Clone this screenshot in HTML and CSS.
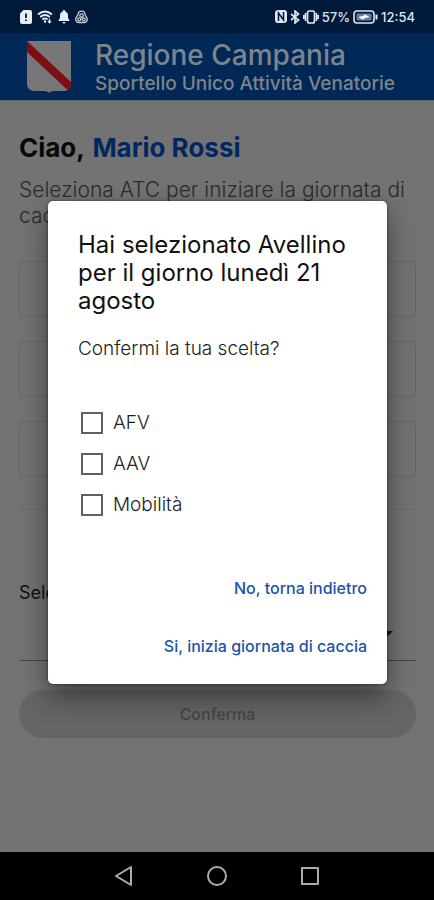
FILE: index.html
```html
<!DOCTYPE html>
<html lang="it">
<head>
<meta charset="utf-8">
<meta name="viewport" content="width=device-width, initial-scale=1">
<title>Sportello Unico Attività Venatorie</title>
<link rel="stylesheet" href="styles.css">
</head>
<body>
<div class="screen">
  <div class="status">
    <div class="status-group">
      <svg width="12" height="14" viewBox="0 0 12 14"><path d="M3.500 0H10a2 2 0 0 1 2 2v10a2 2 0 0 1-2 2H2a2 2 0 0 1-2-2V3.500z" fill="#e8edf5"/><path d="M6 3.500v4.500M6 9.500v1.500" stroke="#001a3b" stroke-width="1.800"/></svg>
      <svg width="16" height="14" viewBox="0 0 16 14" fill="none" stroke="#e8edf5" stroke-width="1.800"><path d="M1 4.500Q8-1.500 15 4.500M3.200 7Q8 3 12.800 7M5.300 9.500Q8 7.300 10.500 9.500"/><path d="M7 11.500h2" stroke-width="2.500"/><path d="M12.500 8.500v4M11 11l1.500 1.800L14 11" stroke-width="1.200"/></svg>
      <svg width="12" height="14" viewBox="0 0 12 14" fill="#e8edf5"><path d="M6 0a1.200 1.200 0 0 1 1.200 1.400C9.400 2 10 3.600 10 5.500V8l1.500 2.200V11H.5v-.8L2 8V5.500C2 3.600 2.600 2 4.800 1.400A1.200 1.200 0 0 1 6 0zM4.500 12h3a1.500 1.500 0 0 1-3 0z"/></svg>
      <svg width="13" height="14" viewBox="0 0 13 14" fill="none" stroke="#c5cedb" stroke-width="1.300"><path d="M6.500 1.200a3.500 3.500 0 0 1 3.500 3.300l1.800 3.200a3.200 3.200 0 0 1-2.600 4.800H3.800a3.200 3.200 0 0 1-2.600-4.800L3 4.500a3.500 3.500 0 0 1 3.500-3.300z"/><circle cx="6.500" cy="5.500" r="1.700"/><circle cx="4.300" cy="9.300" r="1.500"/><circle cx="8.700" cy="9.300" r="1.500"/></svg>
    </div>
    <div class="status-group status-right">
      <svg width="12" height="13" viewBox="0 0 12 13"><rect width="12" height="13" rx="3" fill="#dfe5ee"/><path d="M3.500 11V3l5 7V2" fill="none" stroke="#001a3b" stroke-width="1.500"/></svg>
      <svg width="10" height="14" viewBox="0 0 10 14" fill="none" stroke="#dfe5ee" stroke-width="1.700"><path d="M1 4l7.500 6L5 13V1l3.500 3L1 10"/></svg>
      <svg width="16" height="14" viewBox="0 0 16 14" fill="none" stroke="#dfe5ee" stroke-width="1.700"><rect x="4.500" y="1" width="7" height="12" rx="2"/><path d="M2.500 3v8M13.500 3v8M.7 5v4M15.300 5v4"/></svg>
      <span>57%</span>
      <svg width="25" height="14" viewBox="0 0 25 14"><rect x="1" y="1" width="20" height="12" rx="3" fill="none" stroke="#dfe5ee" stroke-width="1.600"/><rect x="3.500" y="3.500" width="15" height="7" rx="1" fill="#6b7f99"/><path d="M5.500 7l6-1.500V4l5 3-6 1.500V10z" fill="#fff"/><path d="M23.500 4.500v5" stroke="#dfe5ee" stroke-width="2"/></svg>
      <time>12:54</time>
    </div>
  </div>
  <header class="appbar">
    <svg class="crest" width="44" height="52" viewBox="0 0 44 52"><path d="M0 0h44v43q0 6-6 7H27q-4 0-5 2-1-2-5-2H7q-7-1-7-7z" fill="#777779"/><path d="M0 0L44 41V43q0 4-3 6.500L0 11z" fill="#7d0f14"/></svg>
    <div>
      <h1 class="brand">Regione Campania</h1>
      <p class="tagline">Sportello Unico Attività Venatorie</p>
    </div>
  </header>
  <main class="content">
    <h2 class="hello">Ciao, <span>Mario Rossi</span></h2>
    <p class="intro">Seleziona ATC per iniziare la giornata di caccia</p>
    <div class="fields">
      <div class="field"></div>
      <div class="field"></div>
      <div class="field"></div>
    </div>
    <hr class="rule">
    <label class="pick-label" for="pick">Seleziona</label>
    <div class="pick-wrap">
      <select class="pick" id="pick"></select>
      <svg width="10" height="5" viewBox="0 0 10 5"><path d="M0 0h10L5 5z" fill="#111"/></svg>
    </div>
    <button class="confirm" type="button" disabled>Conferma</button>
  </main>
  <nav class="navbar">
    <button type="button" aria-label="Indietro"><svg width="20" height="22" viewBox="0 0 20 22"><path d="M2 11L17 2v18z"/></svg></button>
    <button type="button" aria-label="Home"><svg width="22" height="22" viewBox="0 0 22 22"><circle cx="11" cy="11" r="9"/></svg></button>
    <button type="button" aria-label="Recenti"><svg width="20" height="20" viewBox="0 0 20 20"><rect x="2" y="2" width="16" height="16"/></svg></button>
  </nav>
  <div class="overlay">
    <section class="dialog" role="dialog" aria-modal="true" aria-labelledby="title">
      <h2 class="dialog-title" id="title">Hai selezionato Avellino per il giorno lunedì 21 agosto</h2>
      <p class="dialog-text">Confermi la tua scelta?</p>
      <div class="options">
        <label class="option"><input type="checkbox">AFV</label>
        <label class="option"><input type="checkbox">AAV</label>
        <label class="option"><input type="checkbox">Mobilità</label>
      </div>
      <div class="actions">
        <button type="button">No, torna indietro</button>
        <button type="button">Si, inizia giornata di caccia</button>
      </div>
    </section>
  </div>
</div>
</body>
</html>
```
FILE: styles.css
```css
* { box-sizing: border-box; }
body, h1, h2, p { margin: 0; }
body { font-family: Inter, "Liberation Sans", sans-serif; background: #737373; color: #111; }
button, select { font: inherit; border: 0; background: none; padding: 0; }
svg { display: block; flex: none; }

.screen { position: relative; min-height: 100vh; display: flex; flex-direction: column; }

.status { height: 33px; padding: 0 19px 0 20px; background: #001a3b; color: #dfe5ee; display: flex; justify-content: space-between; align-items: center; font-size: 13px; font-weight: 500; }
.status-group { display: flex; align-items: center; gap: 5px; }
.status-right { gap: 3px; }

.appbar { height: 68px; padding: 0 27px; background: #002856; border-bottom: 1px solid #5c6670; display: flex; align-items: center; gap: 24px; color: #7e848c; }
.brand { font-size: 28px; line-height: 34px; font-weight: 500; }
.tagline { font-size: 19px; line-height: 24px; font-weight: 500; }

.content { flex: 1; padding: 30px 18px 0 19px; display: flex; flex-direction: column; }
.hello { font-size: 26px; line-height: 34px; font-weight: 700; color: #080808; }
.hello span { color: #00275f; margin-left: 2px; }
.intro { margin-top: 12px; font-size: 21px; line-height: 26px; font-weight: 300; color: #2b2b2b; }
.fields { margin-top: 32px; display: grid; gap: 24px; }
.field { height: 56px; border: 1px solid #666; border-radius: 4px; }
.rule { width: 100%; margin: 32px 0 0; border: 0; border-top: 1px solid #6a6a6a; }
.pick-label { margin-top: 71px; font-size: 18px; line-height: 24px; color: #111; }
.pick-wrap { position: relative; margin-top: 8px; }
.pick { width: 100%; height: 48px; appearance: none; border-bottom: 1px solid #444; }
.pick-wrap svg { position: absolute; right: 23px; top: 18px; }
.confirm { margin-top: 29px; height: 48px; border-radius: 24px; background: #656565; color: #444; font-size: 16px; font-weight: 500; }

.navbar { height: 48px; padding: 0 78px; background: #000; display: flex; align-items: center; justify-content: space-around; }
.navbar svg { fill: none; stroke: #adadad; stroke-width: 2; stroke-linejoin: round; }

.overlay { position: absolute; inset: 33px 0 48px; padding: 0 47px 0 48px; display: flex; align-items: center; }
.dialog { width: 100%; padding: 30px 20px 23px 30px; background: #fff; border-radius: 5px; box-shadow: 0 12px 28px rgba(0, 0, 0, .45), 0 0 3px rgba(0, 0, 0, .5); }
.dialog-title { font-size: 24px; line-height: 28px; font-weight: 400; }
.dialog-text { margin-top: 22px; font-size: 19px; line-height: 24px; font-weight: 300; color: #222; }
.options { margin-top: 41px; }
.option { height: 41px; padding-left: 3px; display: flex; align-items: center; gap: 10px; font-size: 19px; font-weight: 300; color: #222; }
.option input { appearance: none; width: 22px; height: 22px; margin: 0; border: 2px solid #606060; background: #fff; }
.actions { margin-top: 48px; display: flex; flex-direction: column; align-items: flex-end; gap: 28px; }
.actions button { height: 30px; font-size: 16px; font-weight: 500; color: #1a55a8; }
```
